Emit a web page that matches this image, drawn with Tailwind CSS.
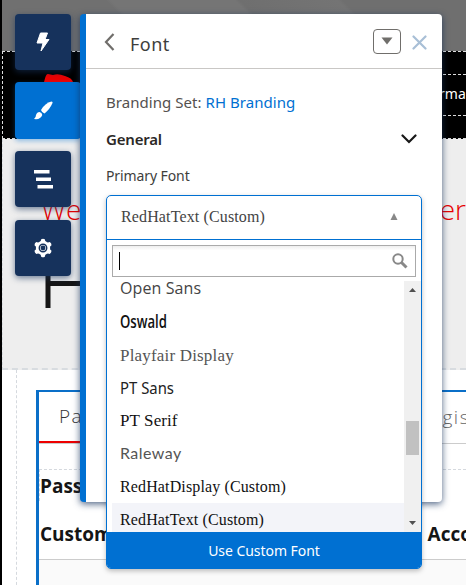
<!DOCTYPE html>
<html lang="en">
<head>
<meta charset="utf-8">
<title>Font</title>
<script src="https://cdn.jsdelivr.net/npm/@tailwindcss/browser@4"></script>
</head>
<body class="relative h-[585px] w-[466px] overflow-hidden bg-white font-['Noto_Sans',sans-serif] text-[#444]">
<!-- Page preview -->
<main class="flex h-[585px] flex-col border-l-2 border-black whitespace-nowrap">
  <div class="h-[51px] shrink-0 bg-[linear-gradient(45deg,#707070_0%,#707070_30%,#757575_31%,#757575_55%,#6f6f6f_56%,#747474_75%,#6f6f6f_76%)]"></div>
  <header class="relative h-[88px] shrink-0 border-y border-l border-dashed border-[#ddd] bg-black">
    <svg class="absolute left-[40px] top-[21px]" width="45" height="40" viewBox="0 0 45 40"><path d="M0 12C2 8 2 1 5 1L10 2Q15 0 22 3Q29 5 30 9Q34 20 24 23Z" fill="#e00"/></svg>
    <div class="ml-[90px] mt-[22px] flex h-[42px] items-center justify-end border-y border-dashed border-[#ddd] pb-[4px] font-['Noto_Sans',sans-serif] text-[14px] text-white"><span class="tracking-[.1px]">Informa</span></div>
  </header>
  <section class="h-[231px] shrink-0 border-b-2 border-l border-dashed border-[#d8dce0] bg-[#eee] pl-[38px]">
    <div class="flex h-[86px] items-end justify-between font-['Open_Sans',sans-serif] text-[28px] font-light leading-[32px] text-[#e80000]"><span>We</span><span>er</span></div>
    <svg class="ml-[4px] mt-[35px]" width="55" height="49" viewBox="0 0 55 49"><path d="M3 0V48M3 23.5H50M50 0V48" stroke="#151515" stroke-width="5" fill="none"/></svg>
  </section>
  <section class="ml-[14px] flex-1 border-l border-dashed border-[#d5d9de] pl-[19px] pt-[20px]">
    <div class="h-[200px] border-l-[3px] border-t-2 border-[#0a6fc8]">
      <div class="flex h-[52px] items-center justify-between border-b border-[#ccc] font-['Open_Sans',sans-serif] text-[19px] font-light tracking-[1.5px] text-[#333]"><span class="flex h-full w-[80px] items-center border-b-2 border-[#e00] pl-[20px]">Pa</span><span class="mr-[-4px] text-[#666]">gis</span></div>
      <div class="mt-[25px] h-[32px] border-l border-t border-dashed border-[#d5d9de] font-['Open_Sans',sans-serif] text-[19px] font-bold leading-[32px] text-[#151515]">Password</div>
      <div class="mt-[17px] flex h-[42px] justify-between border-b border-[#ccc] font-['Open_Sans',sans-serif] text-[19px] font-bold leading-[32px] text-[#151515]"><span class="pl-px">Customer</span><span class="mr-[-6px]">Acco</span></div>
      <div class="h-[40px] bg-[#fafafa]"></div>
    </div>
  </section>
</main>

<!-- Builder navigation -->
<nav class="absolute left-[15px] top-[14px] flex flex-col">
  <a class="flex h-[56px] w-[56px] items-center justify-center rounded bg-[#16325c] shadow-[0_2px_6px_rgba(22,50,92,.6)]"><svg width="14" height="20" viewBox="0 0 14 20"><path d="M4.500 1H11.500L9 7.500H13L5 19L7 11H1Z" fill="#fff" stroke="#fff" stroke-linejoin="round"/></svg></a>
  <a class="mt-[12px] flex h-[57px] w-[66px] items-center rounded bg-[#0070d2] pl-[18px] shadow-[0_2px_5px_rgba(0,112,210,.4)]"><svg width="21" height="21" viewBox="0 0 21 21" fill="#fff"><path d="M8 10Q12 3 18.500 1.500Q20 1.500 19.500 3Q17 9 11.500 13.500Q9 13 8 10Z"/><path d="M6.500 12Q9 12.500 9.300 15Q7.500 20 1 19Q3 17.500 3 15Q4 12 6.500 12Z"/></svg></a>
  <a class="mt-[12px] flex h-[56px] w-[56px] items-center justify-center rounded bg-[#16325c] shadow-[0_2px_6px_rgba(22,50,92,.6)]"><svg width="19" height="19" viewBox="0 0 19 19" fill="#fff"><path d="M0 0H15.500V3.500H0ZM2 7.500H17V11H2ZM3.500 15H19V18.500H3.500Z"/></svg></a>
  <a class="mt-[13px] flex h-[56px] w-[56px] items-center justify-center rounded bg-[#16325c] shadow-[0_2px_6px_rgba(22,50,92,.6)]"><svg width="20" height="20" viewBox="0 0 20 20"><g fill="#fff"><circle cx="10" cy="10" r="7.200"/><path id="tooth" d="M7.500 4L8.200 1.200Q10 .2 11.800 1.200L12.500 4V16L11.800 18.800Q10 19.800 8.200 18.800L7.500 16Z"/><use href="#tooth" transform="rotate(60 10 10)"/><use href="#tooth" transform="rotate(120 10 10)"/></g><circle cx="10" cy="10" r="3.700" fill="#fff" stroke="#16325c" stroke-width="1.500"/><circle cx="10" cy="10" r="2.400" fill="#16325c"/></svg></a>
</nav>

<!-- Font panel -->
<aside class="absolute left-[80px] top-[14px] h-[488px] w-[362px] rounded border-l-[6px] border-[#0070d2] bg-white shadow-[0_2px_7px_rgba(22,50,92,.75)] whitespace-nowrap">
  <header class="flex h-[55px] items-center border-b border-[#c9c7c5] pl-[18px]">
    <svg class="mt-[2px]" width="11" height="18" viewBox="0 0 11 18"><path d="M9.500 1L2 9L9.500 17" fill="none" stroke="#706e6b" stroke-width="2.200"/></svg>
    <h1 class="ml-[15px] mt-[6px] text-[18px] leading-[24px] tracking-[.45px] text-[#3e3e3c]">Font</h1>
    <button class="ml-auto flex h-[25px] w-[28px] items-center justify-center rounded border border-[#706e6b]"><svg width="12" height="8" viewBox="0 0 12 8"><path d="M.5.5H11.500L6 7.500Z" fill="#706e6b"/></svg></button>
    <svg class="ml-[11px] mr-[15px] mt-[3px]" width="15" height="15" viewBox="0 0 15 15"><path d="M1.500 1.500L13.500 13.500M13.500 1.500L1.500 13.500" stroke="#a8bfd6" stroke-width="2.200" stroke-linecap="round"/></svg>
  </header>
  <div class="pl-[20px] pr-[25px]">
    <p class="mt-[22px] text-[15px] leading-[22px] tracking-[.05px] text-[#54514f]">Branding Set: <a class="text-[#0070d2]">RH Branding</a></p>
    <div class="mt-[15px] flex h-[22px] items-center justify-between"><h2 class="text-[15px] font-semibold tracking-[-.2px] text-[#2b2826]">General</h2><svg width="16" height="10" viewBox="0 0 16 10"><path d="M1.500 1.500L8 8L14.500 1.500" fill="none" stroke="#181818" stroke-width="2.200" stroke-linecap="round"/></svg></div>
    <label class="mt-[16px] block text-[14px] leading-[20px] tracking-[-.1px] text-[#3e3e3c]">Primary Font</label>
  </div>
</aside>

<!-- Font picker -->
<div class="absolute left-[106px] top-[195px] flex h-[374px] w-[316px] flex-col overflow-hidden rounded-[5px] border border-[#0070d2] bg-white whitespace-nowrap shadow-[0_2px_5px_rgba(0,0,0,.25)]">
  <div class="flex h-[44px] shrink-0 items-center justify-between border-b border-[#0070d2] pl-[14px] pr-[23px] font-['Liberation_Serif',serif] text-[16px] text-[#444]"><span class="mb-px tracking-[.13px]">RedHatText (Custom)</span><svg class="mb-[3px]" width="8" height="7" viewBox="0 0 8 7"><path d="M4 0L7.500 7H.5Z" fill="#888"/></svg></div>
  <div class="mx-[5px] mt-[5px] flex h-[32px] shrink-0 items-center justify-between border border-[#aaa] bg-[linear-gradient(#eee,#fff_15%)] pl-[6px] pr-[7px]"><i class="h-[18px] w-px bg-black"></i><svg width="16" height="16" viewBox="0 0 16 16" fill="none" stroke="#888"><circle cx="6" cy="6" r="4.700" stroke-width="2"/><path d="M9.500 9.500L14.500 14.500" stroke-width="3"/></svg></div>
  <div class="mt-[4px] flex h-[251px] shrink-0 overflow-hidden pl-[5px]">
    <ul class="mt-[-9px] flex-1 text-[16px] leading-[33px] text-[#222] *:h-[33px] *:pl-[8px]">
      <li class="font-['Open_Sans',sans-serif] tracking-[.1px] text-[#444]">Open Sans</li>
      <li class="font-['Open_Sans',sans-serif] text-[18px] font-semibold text-[#111]"><span class="inline-block origin-left scale-x-[.73]">Oswald</span></li>
      <li class="font-['Liberation_Serif',serif] text-[17px] leading-[35px] tracking-[.18px] text-[#555]">Playfair Display</li>
      <li class="font-['Noto_Sans',sans-serif] text-[16px] leading-[34px]"><span class="inline-block origin-left scale-x-[.93]">PT Sans</span></li>
      <li class="font-['Liberation_Serif',serif] text-[17px] leading-[34px] tracking-[.1px] text-[#111]">PT Serif</li>
      <li class="font-[Lato,sans-serif] text-[16px] leading-[31px] tracking-[.45px] text-[#555]">Raleway</li>
      <li class="font-['Liberation_Serif',serif] tracking-[.13px] text-[#111]">RedHatDisplay (Custom)</li>
      <li class="bg-[#f3f4f9] font-['Liberation_Serif',serif] tracking-[.13px] text-[#111]">RedHatText (Custom)</li>
    </ul>
    <div class="flex w-[17px] flex-col items-center bg-[#f0f0f0] py-[7px]">
      <svg width="7" height="4" viewBox="0 0 7 4"><path d="M3.500 0L7 4H0Z" fill="#505050"/></svg>
      <div class="mt-[129px] h-[34px] w-[13px] bg-[#c1c1c1]"></div>
      <svg class="mt-auto" width="7" height="4" viewBox="0 0 7 4"><path d="M0 0H7L3.500 4Z" fill="#505050"/></svg>
    </div>
  </div>
  <button class="flex-1 bg-[#0070d2] text-[14px] tracking-[-.05px] text-white">Use Custom Font</button>
</div>
</body>
</html>
